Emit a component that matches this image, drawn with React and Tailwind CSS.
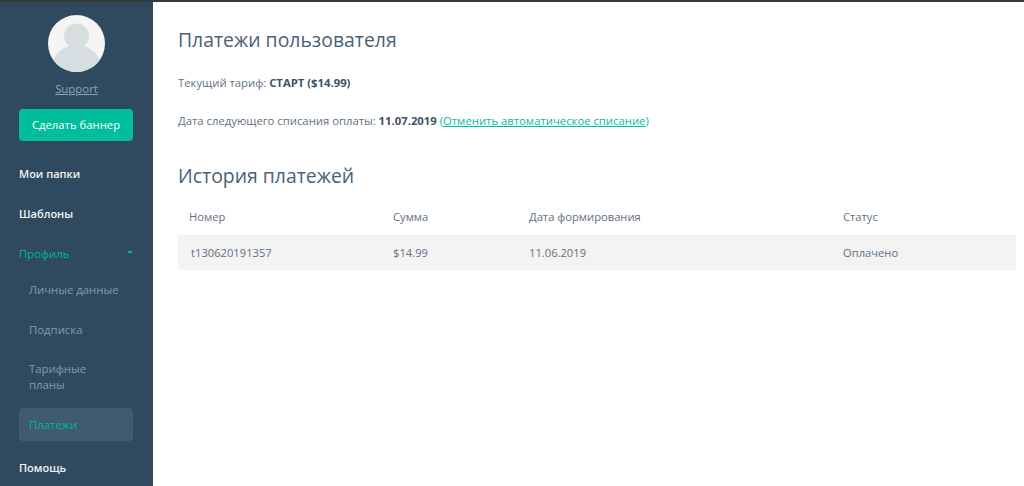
import React from "react";

function Avatar() {
  return (
    <svg width="57" height="57" viewBox="0 0 57 57" className="block">
      <defs>
        <clipPath id="avatar-clip"><circle cx="28.5" cy="28.5" r="28.5" /></clipPath>
      </defs>
      <circle cx="28.5" cy="28.5" r="28.5" fill="#f5f5f5" />
      <g clipPath="url(#avatar-clip)" fill="#d7dee0">
        <circle cx="28.5" cy="21" r="12.5" />
        <ellipse cx="28.5" cy="53" rx="25" ry="23" />
      </g>
    </svg>
  );
}

const Top = ({ children }) => (
  <div className="h-10 shrink-0 flex items-center pl-[19px] text-[11px] font-semibold text-[#f2f4f5]">{children}</div>
);

const Sub = ({ children }) => (
  <div className="pl-[29px] pr-4 py-[10px] text-[11.35px] leading-[20px] text-[#8399aa]">{children}</div>
);

export default function App() {
  return (
    <div className="h-[486px] w-[1024px] overflow-hidden bg-white flex flex-col font-['Open_Sans',sans-serif]">
      <div className="h-[2px] shrink-0 bg-[#333a3e]" />
      <div className="flex flex-1 min-h-0">
        <aside className="w-[153px] shrink-0 bg-[#2f4a5f] flex flex-col overflow-hidden">
          <div className="flex justify-center pt-[13px] shrink-0"><Avatar /></div>
          <a className="mt-[8px] shrink-0 text-center text-[11.4px] leading-[18px] text-[#8ea3b3] underline">Support</a>
          <button className="mt-[11px] ml-[19px] mr-[20px] h-8 shrink-0 rounded-[4px] bg-[#00bd9b] text-white text-[11.3px] flex items-center justify-center">
            Сделать баннер
          </button>
          <div className="mt-[13px] flex flex-col shrink-0">
            <Top>Мои папки</Top>
            <Top>Шаблоны</Top>
            <div className="h-10 flex items-center justify-between pl-[19px] pr-[20px] text-[11.3px] text-[#00b596]">
              <span>Профиль</span>
              <span className="mb-[3px] w-0 h-0 border-x-[3px] border-x-transparent border-t-[3px] border-t-[#00bd9b]" />
            </div>
            <div className="-mt-[4px] flex flex-col">
              <Sub>Личные данные</Sub>
              <Sub>Подписка</Sub>
              <div className="pl-[29px] pr-4 py-[11px] text-[11.35px] leading-[16px] text-[#8399aa]">Тарифные<br />планы</div>
            </div>
            <div className="ml-[19px] mr-[20px] mt-[4px] h-[33px] rounded-[4px] bg-[#405b70] flex items-center pl-[10px] text-[11.35px] text-[#00b596]">
              Платежи
            </div>
            <div className="mt-[7px]"><Top>Помощь</Top></div>
          </div>
        </aside>
        <main className="flex-1 min-w-0 pl-[25px] pr-2 text-[#5f7182] text-[11.3px]">
          <h1 className="mt-[23px] text-[19.4px] leading-[30px] font-normal text-[#4a6176]">Платежи пользователя</h1>
          <p className="mt-[19px] leading-[18px]">Текущий тариф: <b className="font-bold text-[#3d5266]">СТАРТ ($14.99)</b></p>
          <p className="mt-5 leading-[18px]">
            Дата следующего списания оплаты: <b className="font-bold text-[#3d5266]">11.07.2019</b>{" "}
            <span className="text-[#00bd9b]">(<a className="underline">Отменить автоматическое списание</a>)</span>
          </p>
          <h2 className="mt-[31px] text-[19.4px] leading-[30px] font-normal text-[#4a6176]">История платежей</h2>
          <div className="mt-[8px] text-[11.2px]">
            <div className="grid grid-cols-[204px_136px_314px_1fr] h-9 items-center pl-[11px]">
              <span>Номер</span><span>Сумма</span><span>Дата формирования</span><span>Статус</span>
            </div>
            <div className="grid grid-cols-[204px_136px_314px_1fr] h-[35px] items-center pl-[11px] pt-[2px] bg-[#f3f3f3]">
              <span className="ml-[2px]">t130620191357</span><span>$14.99</span><span>11.06.2019</span><span>Оплачено</span>
            </div>
          </div>
        </main>
      </div>
    </div>
  );
}
